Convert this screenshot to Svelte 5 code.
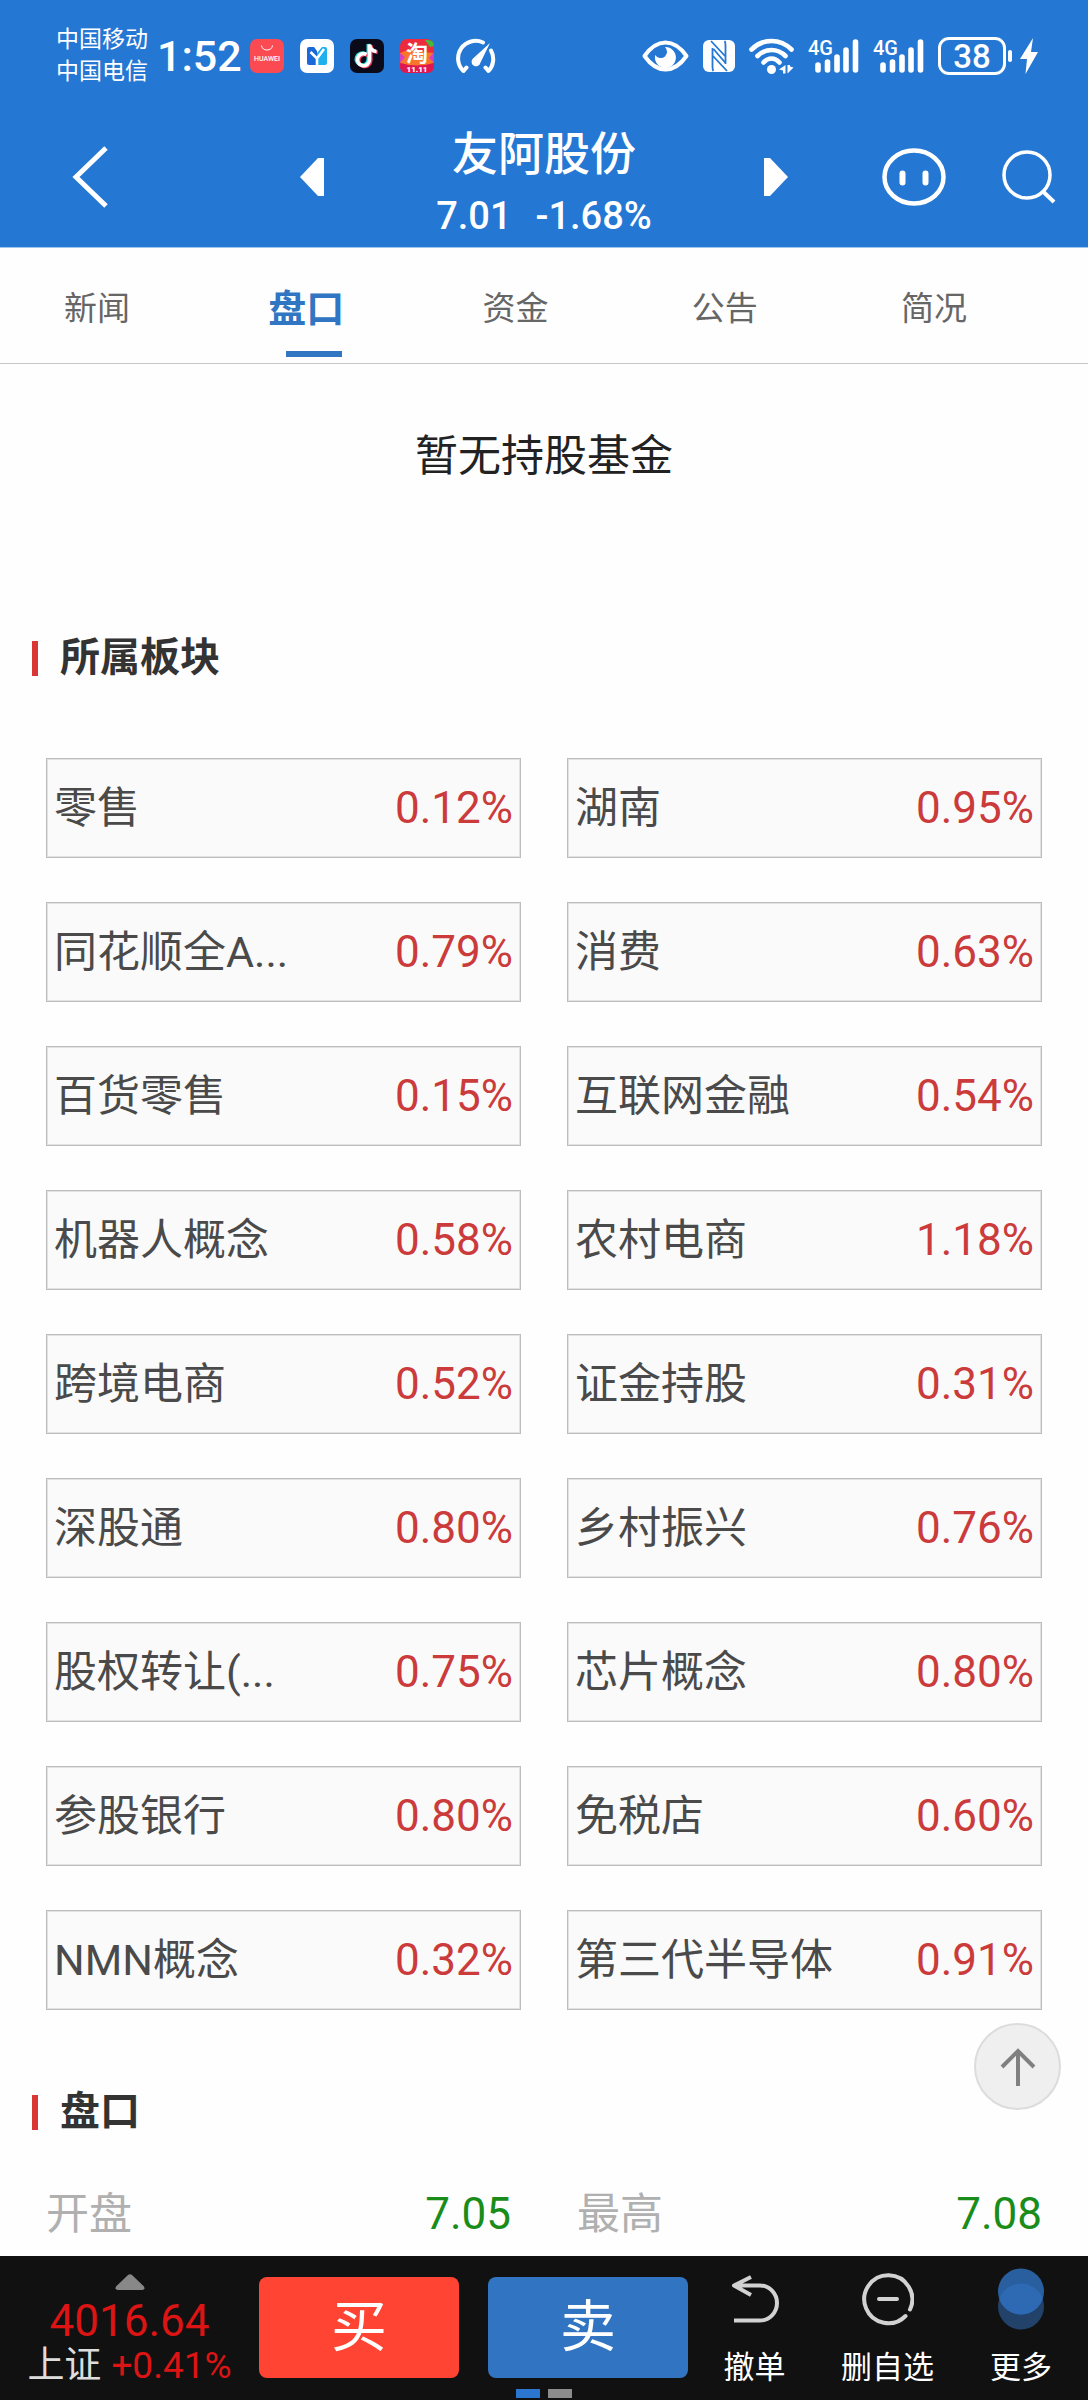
<script>
  const tabs = ['新闻', '盘口', '资金', '公告', '简况'];
  let active = $state('盘口');

  const sectors = [
    ['零售', '0.12%'], ['湖南', '0.95%'],
    ['同花顺全A...', '0.79%'], ['消费', '0.63%'],
    ['百货零售', '0.15%'], ['互联网金融', '0.54%'],
    ['机器人概念', '0.58%'], ['农村电商', '1.18%'],
    ['跨境电商', '0.52%'], ['证金持股', '0.31%'],
    ['深股通', '0.80%'], ['乡村振兴', '0.76%'],
    ['股权转让(...', '0.75%'], ['芯片概念', '0.80%'],
    ['参股银行', '0.80%'], ['免税店', '0.60%'],
    ['NMN概念', '0.32%'], ['第三代半导体', '0.91%']
  ];

  const quotes = [['开盘', '7.05'], ['最高', '7.08']];
</script>

{#snippet signal()}
  <svg class="signal" viewBox="0 0 51 36" aria-hidden="true">
    <text x="0" y="17" font-size="20" font-weight="500" fill="#fff">4G</text>
    <g stroke="#fff" stroke-width="5.6" stroke-linecap="round">
      <path d="M10 27v5M19.500 24v8M29 19v13M38 12v20M47.500 4v28" />
    </g>
  </svg>
{/snippet}

<div class="app">
  <header>
    <div class="status">
      <div class="carriers"><span>中国移动</span><span>中国电信</span></div>
      <time>1:52</time>
      <div class="apps">
        <svg viewBox="0 0 34 34" aria-hidden="true">
          <rect width="34" height="34" rx="7" fill="#fb4a52" />
          <path d="M11.500 6.500a5.600 5.600 0 0 0 11 0" fill="none" stroke="#fff" stroke-width="1" />
          <text x="17" y="22" text-anchor="middle" font-size="7" font-weight="500" fill="#fff">HUAWEI</text>
        </svg>
        <svg viewBox="0 0 34 34" aria-hidden="true">
          <rect width="34" height="34" rx="7" fill="#fff" />
          <path d="M7 10q0-2 2-2h5l3 4v14H9q-2 0-2-2z" fill="#1b68d8" />
          <path d="M17 14l5-6h3q2 0 2 2v14q0 2-2 2h-8z" fill="#1fb0ee" />
          <path d="M10.500 13l6.500 6.500L24 10M17 19v7.500" fill="none" stroke="#fff" stroke-width="2.600" />
        </svg>
        <svg viewBox="0 0 34 34" aria-hidden="true">
          <rect width="34" height="34" rx="7" fill="#0b0a18" />
          <g fill="none" stroke-width="3.600">
            <path d="M16.500 15.500a6 6 0 1 0 3 5.500V5.500q1 6.500 7 7" stroke="#28e0e0" transform="translate(-1.200 -.6)" />
            <path d="M16.500 15.500a6 6 0 1 0 3 5.500V5.500q1 6.500 7 7" stroke="#f43a5c" transform="translate(1.200 .8)" />
            <path d="M16.500 15.500a6 6 0 1 0 3 5.500V5.500q1 6.500 7 7" stroke="#fff" />
          </g>
        </svg>
        <svg viewBox="0 0 34 34" aria-hidden="true">
          <rect width="34" height="34" rx="7" fill="#ee2b3c" />
          <path d="M0 14l10-4 12 3 12 1v10q-17 6-34 0z" fill="#f8762c" />
          <path d="M0 14l5 4-5 6zM34 13l-5 6 5 5z" fill="#d63fc0" />
          <path d="M25 1h3q6 0 6 6l-4 1z" fill="#46b83c" />
          <path d="M0 24q17 5 34 0v3q0 7-7 7H7q-7 0-7-7z" fill="#e01850" />
          <text x="17" y="22" text-anchor="middle" font-size="22" font-weight="700" fill="#fff">淘</text>
          <text x="17" y="33" text-anchor="middle" font-size="8" font-weight="900" fill="#fff">11.11</text>
        </svg>
      </div>
      <svg class="gauge" viewBox="0 0 40 36" aria-hidden="true">
        <g fill="none" stroke="#fff" stroke-width="4" stroke-linecap="round" stroke-linejoin="round">
          <path d="M27 4.500A17.500 17.500 0 0 0 7.500 33l3-3.500M35 12.500A17.500 17.500 0 0 1 32.500 33l-3-3.500" />
        </g>
        <path d="M34 5L17 20.500a4.500 4.500 0 1 0 7.500 4z" fill="#fff" />
      </svg>

      <div class="indicators">
        <svg class="eye" viewBox="0 0 47 32" aria-hidden="true">
          <path d="M2.500 16Q12 2.500 23.500 2.500T44.500 16Q35 29.500 23.500 29.500T2.500 16z" fill="none" stroke="#fff" stroke-width="4" stroke-linejoin="round" />
          <path d="M23 7a10.500 10.500 0 1 1-9.800 8 6.500 6.500 0 0 0 9.800 1.500q4-5 0-9.500z" fill="#fff" />
        </svg>
        <svg class="nfc" viewBox="0 0 32 32" aria-hidden="true">
          <rect width="32" height="32" rx="6" fill="#fff" />
          <g fill="none" stroke="#2577d4" stroke-width="1.800">
            <path d="M10.500 31q-1-1-1-4V8M21.500 1q1 1 1 4v19M8 1l14 15M10.500 9l12 14M10 16l14 15" />
          </g>
        </svg>
        <svg class="wifi" viewBox="0 0 45 36" aria-hidden="true">
          <g fill="none" stroke="#fff" stroke-width="4.600" stroke-linecap="round">
            <path d="M2.500 11.500Q11 3 22.500 3T42.500 11.500M8.500 18Q14.500 12 22.500 12T36.500 18M14.500 24.500Q18 20.500 22.500 20.500T30.500 24.500" />
          </g>
          <circle cx="22.500" cy="31.500" r="4.500" fill="#fff" />
          <path d="M36.500 27v8.500H34v-3l-4-1zM38.500 27v8.500l6-6-3.500-1V27z" fill="#fff" />
        </svg>
        {@render signal()}
        {@render signal()}
        <div class="battery">
          <span class="cell">38</span><span class="nub"></span>
          <svg viewBox="0 0 18 36" aria-hidden="true"><path d="M13 0L0 21h7L5.500 36 18 14h-7z" fill="#fff" /></svg>
        </div>
      </div>
    </div>

    <nav class="titlebar">
      <button class="back" aria-label="返回">
        <svg viewBox="0 0 36 62"><path d="M34 2L4 31l30 29" fill="none" stroke="#fff" stroke-width="5" /></svg>
      </button>
      <button class="step" aria-label="上一只">
        <svg viewBox="0 0 24 38"><path d="M24 0h-6L0 19l18 19h6z" fill="#fff" /></svg>
      </button>
      <div class="stock">
        <h1>友阿股份</h1>
        <p><span>7.01</span><span>-1.68%</span></p>
      </div>
      <button class="step" aria-label="下一只">
        <svg viewBox="0 0 24 38"><path d="M0 0h6l18 19L6 38H0z" fill="#fff" /></svg>
      </button>
      <div class="tools">
        <button aria-label="助手">
          <svg class="robot" viewBox="0 0 64 58">
            <ellipse cx="32" cy="29" rx="29.500" ry="26.500" fill="none" stroke="#fff" stroke-width="4.500" />
            <path d="M20.500 25.500v9M43.500 25.500v9" stroke="#fff" stroke-width="6" stroke-linecap="round" />
          </svg>
        </button>
        <button aria-label="搜索">
          <svg class="search" viewBox="0 0 54 54">
            <circle cx="25" cy="25" r="23" fill="none" stroke="#fff" stroke-width="3.500" />
            <path d="M40.500 41L52 52" stroke="#fff" stroke-width="4" />
          </svg>
        </button>
      </div>
    </nav>
  </header>

  <div class="tabs" role="tablist">
    {#each tabs as tab}
      <button role="tab" aria-selected={active === tab} class:active={active === tab} onclick={() => (active = tab)}>{tab}</button>
    {/each}
  </div>

  <main>
    <p class="empty">暂无持股基金</p>

    <h2>所属板块</h2>
    <div class="sectors">
      {#each sectors as [name, change]}
        <a href="#sector"><span>{name}</span><b>{change}</b></a>
      {/each}
    </div>

    <h2>盘口</h2>
    <dl>
      {#each quotes as [label, value]}
        <div><dt>{label}</dt><dd>{value}</dd></div>
      {/each}
    </dl>

    <button class="totop" aria-label="回到顶部">
      <svg viewBox="0 0 36 38"><path d="M18 38V3M2 19L18 3l16 16" fill="none" stroke="#808080" stroke-width="4" /></svg>
    </button>
  </main>

  <footer>
    <div class="actions">
      <button class="index">
        <svg viewBox="0 0 30 16" aria-hidden="true"><path d="M13 1q2-1.500 4 0l12 11.500q1.500 3.500-2 3.500H3q-3.500 0-2-3.500z" fill="#888" /></svg>
        <strong>4016.64</strong>
        <span class="change"><i>上证</i>+0.41%</span>
      </button>
      <button class="trade buy">买</button>
      <button class="trade sell">卖</button>
      <button class="tool">
        <svg viewBox="0 0 52 62" aria-hidden="true">
          <path d="M22 9L5 17.500 22 27M5 17.500h26a17 17.500 0 0 1 0 35H5" fill="none" stroke="#d2d2d2" stroke-width="4" stroke-linejoin="round" />
        </svg>
        撤单
      </button>
      <button class="tool">
        <svg viewBox="0 0 52 62" aria-hidden="true">
          <g fill="none" stroke="#d2d2d2" stroke-width="4" stroke-linecap="round">
            <path d="M48 41.500A24 24 0 1 0 43.500 48M17 31h18" />
          </g>
        </svg>
        删自选
      </button>
      <button class="tool">
        <svg viewBox="0 0 52 62" aria-hidden="true">
          <circle cx="26" cy="38.500" r="23" fill="#22426a" />
          <circle cx="26" cy="23.500" r="23" fill="#295f9f" />
          <path d="M4.300 31a23 23 0 0 1 43.400 0 23 23 0 0 1-43.400 0z" fill="#2d6ab3" />
        </svg>
        更多
      </button>
    </div>
    <div class="pager"><span></span><span></span></div>
  </footer>
</div>

<style>
  :global(body) { margin: 0; background: #fefefe; }
  .app {
    display: flex;
    flex-direction: column;
    min-height: 100vh;
    font-family: Roboto, "Noto Sans CJK SC", sans-serif;
    color: #333;
    background: #fefefe;
  }
  button {
    font: inherit;
    color: inherit;
    background: none;
    border: 0;
    padding: 0;
    margin: 0;
    cursor: pointer;
  }
  svg { display: block; }
  h1, h2, p, dl, dd { margin: 0; }

  header { background: #2577d4; color: #fff; padding: 24px 32px 0; border-bottom: 1px solid #9cc8f0; }
  .status { display: flex; align-items: center; height: 64px; padding: 0 18px 0 24px; }
  .carriers { display: flex; flex-direction: column; font-size: 23px; line-height: 32px; }
  time { font-size: 43px; line-height: 64px; font-weight: 500; margin: 0 8px 0 9px; }
  .apps { display: flex; gap: 16px; }
  .apps svg { width: 34px; height: 34px; }
  .gauge { width: 40px; height: 36px; margin-left: 22px; }
  .indicators { display: flex; align-items: center; gap: 14px; margin-left: auto; }
  .eye { width: 47px; height: 32px; }
  .nfc { width: 32px; height: 32px; }
  .wifi { width: 45px; height: 36px; }
  .signal { width: 51px; height: 36px; overflow: visible; }
  .battery { display: flex; align-items: center; gap: 2px; }
  .cell {
    box-sizing: border-box;
    width: 68px;
    height: 38px;
    border: 3px solid #fff;
    border-radius: 11px;
    font-size: 33px;
    line-height: 34px;
    font-weight: 500;
    text-align: center;
  }
  .nub { width: 4px; height: 12px; border-radius: 2px; background: #fff; }
  .battery svg { width: 18px; height: 36px; margin-left: 6px; }

  .titlebar {
    display: grid;
    grid-template-columns: 1fr auto 440px auto 1fr;
    align-items: center;
    height: 140px;
    padding-top: 19px;
  }
  .back { justify-self: start; margin-left: 40px; }
  .back svg { width: 36px; height: 62px; }
  .step svg { width: 24px; height: 38px; }
  .stock { padding-top: 14px; text-align: center; }
  h1 { font-size: 46px; line-height: 64px; font-weight: 500; }
  .stock p { display: flex; justify-content: center; gap: 24px; font-size: 38px; line-height: 60px; font-weight: 500; }
  .tools { display: flex; align-items: center; justify-content: flex-end; gap: 56px; }
  .robot { width: 64px; height: 58px; }
  .search { width: 54px; height: 54px; }

  .tabs {
    display: grid;
    grid-template-columns: repeat(5, 1fr);
    padding-right: 42px;
    border-bottom: 1px solid #c6c6c6;
  }
  .tabs button {
    position: relative;
    height: 115px;
    padding-right: 15px;
    font-size: 33px;
    color: #666;
  }
  .tabs .active { font-size: 38px; font-weight: 700; color: #3076c2; }
  .tabs .active::after {
    content: "";
    position: absolute;
    left: 50%;
    bottom: 6px;
    width: 56px;
    height: 6px;
    margin-left: -28px;
    background: #3076c2;
  }

  main { position: relative; flex: 1; }
  .empty { padding: 62px 0 140px; font-size: 43px; line-height: 60px; text-align: center; color: #222; }
  h2 {
    display: flex;
    align-items: center;
    gap: 22px;
    padding: 0 32px;
    font-size: 40px;
    line-height: 64px;
    font-weight: 700;
  }
  h2::before { content: ""; width: 6px; height: 35px; background: #d93636; }
  .sectors {
    display: grid;
    grid-template-columns: 1fr 1fr;
    gap: 44px 46px;
    padding: 68px 46px 70px;
  }
  .sectors a {
    display: flex;
    align-items: center;
    justify-content: space-between;
    box-sizing: border-box;
    height: 100px;
    padding: 0 7px;
    border: 1px solid #bdbdbd;
    box-shadow: inset 0 0 0 1px #e2e2e2;
    background: #fafafa;
    font-size: 43px;
    line-height: 60px;
    color: #4a4a4a;
    text-decoration: none;
    white-space: nowrap;
  }
  .sectors b { font-size: 44px; font-weight: 400; color: #cb3b3b; }
  dl { display: grid; grid-template-columns: 1fr 1fr; gap: 66px; padding: 40px 46px 11px; }
  dl div { display: flex; align-items: center; justify-content: space-between; line-height: 60px; }
  dt { font-size: 43px; color: #b0b0b0; }
  dd { font-size: 44px; color: #1a8c1a; }
  .totop {
    position: absolute;
    right: 27px;
    bottom: 146px;
    display: grid;
    place-items: center;
    width: 87px;
    height: 87px;
    border: 2px solid #dcdcdc;
    border-radius: 50%;
    background: #efefef;
  }
  .totop svg { width: 36px; height: 38px; }

  footer { position: sticky; bottom: 0; background: #111; color: #fff; padding-bottom: 2px; }
  .actions {
    display: grid;
    grid-template-columns: 259fr 229fr 200fr 133fr 133fr 134fr;
    align-items: start;
    height: 133px;
  }
  .index { display: flex; flex-direction: column; align-items: center; padding-top: 18px; color: #dc1414; }
  .index svg { width: 30px; height: 16px; }
  .index strong { font-size: 44px; line-height: 48px; font-weight: 400; padding-top: 7px; }
  .change { display: flex; gap: 10px; font-size: 37px; line-height: 42px; }
  .change i { font-style: normal; color: #ddd; }
  .trade { height: 101px; margin-top: 21px; border-radius: 8px; font-size: 56px; line-height: 101px; }
  .buy { background: #ff4433; margin-right: 29px; }
  .sell { background: #3174c2; }
  .tool { display: flex; flex-direction: column; align-items: center; padding-top: 12px; font-size: 31px; line-height: 40px; }
  .tool svg { width: 52px; height: 62px; margin-bottom: 18px; }
  .pager { display: flex; justify-content: center; gap: 8px; }
  .pager span { width: 24px; height: 9px; background: #8c8c8c; }
  .pager span:first-child { background: #2b77cf; }
</style>
